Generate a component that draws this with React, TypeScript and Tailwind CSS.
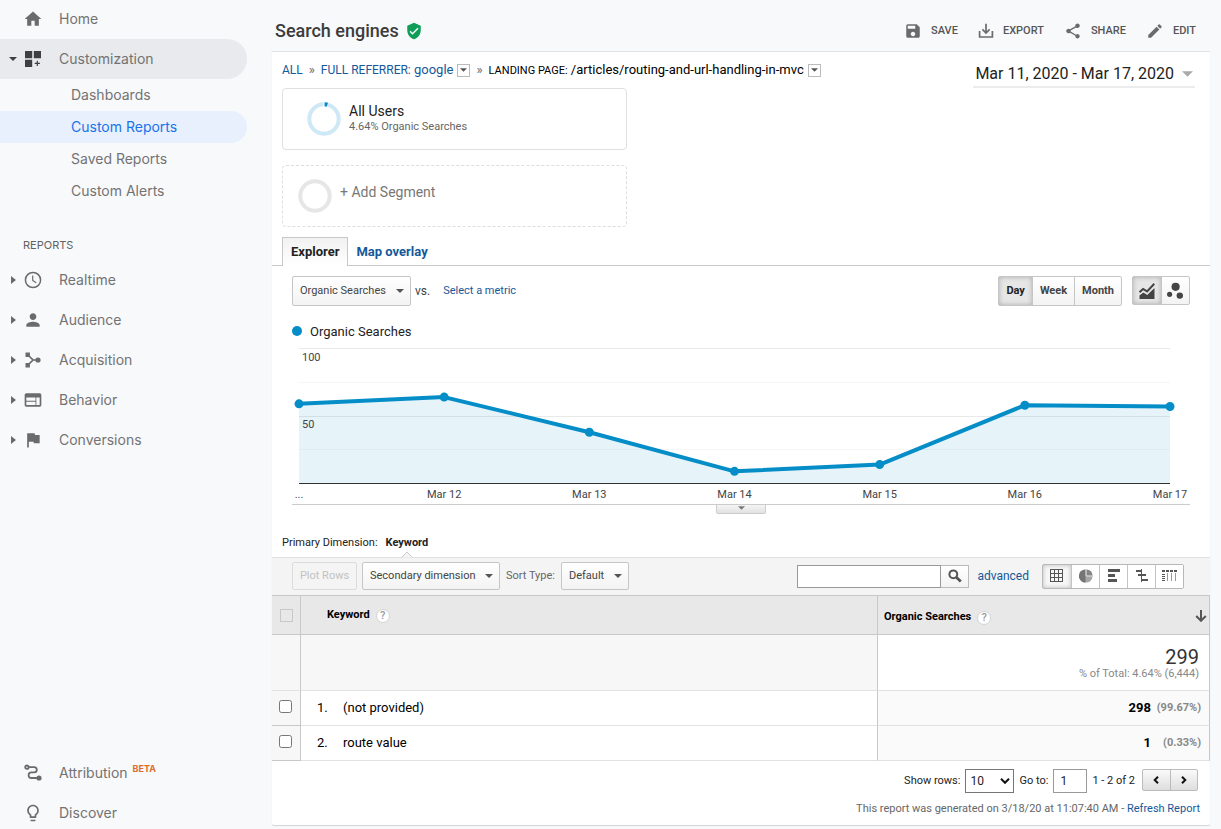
import type { ReactNode } from "react";
import {
  MdEdit,
  MdFlag,
  MdHome,
  MdOutlineLightbulb,
  MdPerson,
  MdSave,
  MdShare,
  MdVerifiedUser,
  MdWeb,
} from "react-icons/md";

const points = [
  { label: "...", value: 59 },
  { label: "Mar 12", value: 64 },
  { label: "Mar 13", value: 38 },
  { label: "Mar 14", value: 9 },
  { label: "Mar 15", value: 14 },
  { label: "Mar 16", value: 58 },
  { label: "Mar 17", value: 57 },
];

const keywords = [
  { name: "(not provided)", searches: 298, share: "(99.67%)" },
  { name: "route value", searches: 1, share: "(0.33%)" },
];

function CaretDown({ className }: { className: string }) {
  return (
    <svg viewBox="0 0 8 4" className={className} aria-hidden="true">
      <path d="M0 0h8L4 4z" fill="currentColor" />
    </svg>
  );
}

function CustomizeIcon() {
  return (
    <svg viewBox="0 0 16 16" className="size-4 text-[#3c4043]" fill="currentColor">
      <path d="M0 0h7.2v7.2H0zM8.8 0H16v7.2H8.8zM0 8.8h7.2V16H0zM11.7 9.8h1.2v2h2v1.200h-2v2h-1.200v-2h-2v-1.200h2z" />
    </svg>
  );
}

function ClockIcon() {
  return (
    <svg viewBox="0 0 18 18" className="size-[18px]" fill="none" stroke="currentColor" strokeWidth="1.5">
      <circle cx="9" cy="9" r="7.6" />
      <path d="M8.7 4.6v4.9l3.6 2.2" strokeWidth="1.2" />
    </svg>
  );
}

function AcquisitionIcon() {
  return (
    <svg viewBox="0 0 18 18" className="size-[18px]" fill="currentColor">
      <path d="M1.5 1.5h4.4v4.4H1.5zM1.5 12.1h4.4v4.4H1.5z" />
      <circle cx="14" cy="9" r="2.6" />
      <path d="M4 4l5 5-5 5M9 9h4" fill="none" stroke="currentColor" strokeWidth="1.7" />
    </svg>
  );
}

function AttributionIcon() {
  return (
    <svg viewBox="0 0 18 18" className="size-[18px]" fill="none" stroke="currentColor" strokeWidth="1.8">
      <circle cx="2.9" cy="3.2" r="1.7" />
      <path d="M4.8 3.2h5.4a2.6 2.6 0 0 1 0 5.2H7.4a2.8 2.8 0 0 0 0 5.6H14" />
      <circle cx="15" cy="14" r="2.6" fill="currentColor" stroke="none" />
    </svg>
  );
}

function ExportIcon() {
  return (
    <svg viewBox="0 0 16 16" className="size-4" fill="none" stroke="currentColor" strokeWidth="1.7">
      <path d="M8 .8v9M4.4 6.4L8 10l3.6-3.6M1.6 8v6h12.8V8" />
    </svg>
  );
}

function LineChartIcon() {
  return (
    <svg viewBox="0 0 16 16" className="size-4" fill="currentColor">
      <path d="M.5 16v-3.6l3.6-3.1 4 2.4 7.4-6.6V16z" />
      <path d="M.5 9.900l3.600-3.200 4 2.400 7.200-7.600" fill="none" stroke="#e6e6e6" strokeWidth="4" />
      <path d="M.5 9.200l3.600-3.200 4 2.400 7.200-7.600" fill="none" stroke="currentColor" strokeWidth="2" />
    </svg>
  );
}

function BubblesIcon() {
  return (
    <svg viewBox="0 0 18 18" className="size-[18px]" fill="currentColor">
      <circle cx="9.6" cy="4.8" r="4.1" />
      <circle cx="3.6" cy="12.3" r="2.6" />
      <circle cx="13.8" cy="13.6" r="3.2" />
    </svg>
  );
}

function GridIcon() {
  return (
    <svg viewBox="0 0 14 14" className="size-3.5" fill="none" stroke="currentColor" shapeRendering="crispEdges">
      <path d="M.5.5h12v12H.5zM4.5.5v12M8.5.5v12M.5 4.5h12M.5 8.5h12" />
    </svg>
  );
}

function PieIcon() {
  return (
    <svg viewBox="0 0 14 14" className="size-3.5">
      <circle cx="7" cy="7" r="6.6" fill="#a6a6a6" />
      <path d="M6.5.4a6.6 6.6 0 0 0 0 13.2z" fill="#757575" />
      <path d="M7.500.5V6.500h6a6.400 6.400 0 0 0-6-6z" fill="#858585" />
      <path d="M7 .4V7h6.600" stroke="#ddd" strokeWidth="1" fill="none" />
    </svg>
  );
}

function BarsIcon() {
  return (
    <svg viewBox="0 0 14 14" className="size-3.5" fill="currentColor">
      <path d="M1 0h12v3H1zM1 5h7v3H1zM1 10h9v3H1z" />
    </svg>
  );
}

function ComparisonIcon() {
  return (
    <svg viewBox="0 0 14 14" className="size-3.5" fill="currentColor" shapeRendering="crispEdges">
      <path d="M6 0h1v13H6zM1 1h5v2H1zM7 5h4v2H7zM3 5h3v2H3zM7 10h6v2H7z" />
    </svg>
  );
}

function PivotIcon() {
  return (
    <svg viewBox="0 0 16 14" className="h-3.5 w-4" fill="none" stroke="currentColor" shapeRendering="crispEdges">
      <path d="M0 2h16" strokeWidth="2" strokeDasharray="3 1" />
      <path d="M0 5.500h3M0 7.500h3M0 9.500h3M0 11.500h3" />
      <path d="M5.500 4v8M9.500 4v8M13.500 4v8" stroke="#999" />
    </svg>
  );
}

function SearchIcon() {
  return (
    <svg viewBox="0 0 14 14" className="size-3.5" fill="none" stroke="currentColor">
      <circle cx="5.300" cy="5.300" r="3.900" strokeWidth="2" />
      <path d="M8.300 8.300l4.500 4.200" strokeWidth="2.800" />
    </svg>
  );
}

function NavItem({ icon, children, className = "h-10" }: { icon: ReactNode; children: ReactNode; className?: string }) {
  return (
    <a href="#" className={`flex items-center pl-6 ${className}`}>
      <span className="flex w-[18px] justify-center text-[#6b6b6b]">{icon}</span>
      <span className="pl-[17px]">{children}</span>
    </a>
  );
}

function ReportItem({ icon, label }: { icon: ReactNode; label: string }) {
  return (
    <a href="#" className="flex h-10 items-center">
      <span className="w-6 pl-[11px] text-[#6b6b6b]">
        <svg viewBox="0 0 5 8" className="h-2 w-[5px]">
          <path d="M0 0v8l5-4z" fill="currentColor" />
        </svg>
      </span>
      <span className="flex w-[18px] justify-center text-[#6b6b6b]">{icon}</span>
      <span className="pl-[17px]">{label}</span>
    </a>
  );
}

function Sidebar() {
  return (
    <nav className="sticky top-0 flex h-screen w-[272px] shrink-0 flex-col overflow-hidden font-['Inter',sans-serif] text-sm text-[#737373]">
      <NavItem icon={<MdHome size={20} className="shrink-0" />} className="h-[39px] pb-px">Home</NavItem>
      <a href="#" className="mr-[25px] flex h-10 shrink-0 items-center rounded-r-full bg-[#e8eaed]">
        <span className="w-6 pl-[9px]">
          <CaretDown className="h-1 w-2 text-[#3c4043]" />
        </span>
        <span className="flex w-[18px] justify-center">
          <CustomizeIcon />
        </span>
        <span className="pl-[17px]">Customization</span>
      </a>
      <a href="#" className="flex h-8 items-center pl-[71px]">Dashboards</a>
      <a href="#" className="mr-[25px] flex h-8 items-center rounded-r-full bg-[#e8f0fe] pl-[71px] text-[#1a73e8]">Custom Reports</a>
      <a href="#" className="flex h-8 items-center pl-[71px]">Saved Reports</a>
      <a href="#" className="flex h-8 items-center pl-[71px]">Custom Alerts</a>
      <h2 className="flex h-[53px] items-center pt-6 pl-[23px] text-[11px] text-[#616161]">REPORTS</h2>
      <ReportItem icon={<ClockIcon />} label="Realtime" />
      <ReportItem icon={<MdPerson size={20} className="shrink-0" />} label="Audience" />
      <ReportItem icon={<AcquisitionIcon />} label="Acquisition" />
      <ReportItem icon={<MdWeb size={20} className="shrink-0" />} label="Behavior" />
      <ReportItem icon={<MdFlag size={20} className="shrink-0" />} label="Conversions" />
      <div className="mt-auto">
        <NavItem icon={<AttributionIcon />}>
          <span className="flex items-start gap-[5px]">
            Attribution
            <span className="text-[9px] leading-3 font-bold text-[#e06c2c]">BETA</span>
          </span>
        </NavItem>
        <NavItem icon={<MdOutlineLightbulb size={20} className="shrink-0" />} className="h-9 pt-1">Discover</NavItem>
      </div>
    </nav>
  );
}

function HeaderAction({ icon, label }: { icon: ReactNode; label: string }) {
  return (
    <button type="button" className="flex items-center gap-[9px] text-[11px] font-medium text-[#555]">
      <span className="text-[#6b6b6b]">{icon}</span>
      <span className="pt-px">{label}</span>
    </button>
  );
}

function Picker({ label, options, className }: { label: string; options: string[]; className: string }) {
  return (
    <span className="relative flex">
      <select
        aria-label={label}
        className={`appearance-none rounded-xs border border-[#c6c6c6] bg-linear-to-b from-white to-[#f3f3f3] pl-[7px] text-[11px] text-[#444] ${className}`}
      >
        {options.map((o) => (
          <option key={o}>{o}</option>
        ))}
      </select>
      <CaretDown className="pointer-events-none absolute inset-y-0 right-[7px] my-auto h-1 w-2 text-[#555]" />
    </span>
  );
}

function CrumbMenu({ label }: { label: string }) {
  return (
    <button type="button" aria-label={label} className="flex size-[13px] items-center justify-center border border-[#bbb] bg-white">
      <CaretDown className="h-1 w-[7px] text-[#555]" />
    </button>
  );
}

function Help() {
  return (
    <button
      type="button"
      aria-label="Help"
      className="flex size-3.5 items-center justify-center rounded-full border border-[#d4d4d4] bg-white text-[11px] leading-3 font-medium text-[#999]"
    >
      ?
    </button>
  );
}

function Segments() {
  return (
    <div className="flex w-[345px] flex-col gap-[15px]">
      <button type="button" className="flex h-[62px] items-center rounded-sm border border-[#e0e0e0] bg-white pl-6 text-left">
        <svg viewBox="0 0 34 34" className="size-[34px]" fill="none" strokeWidth="4">
          <circle cx="17" cy="17" r="14.700" stroke="#cfe8f5" />
          <path d="M17.300 2.300a14.700 14.700 0 0 1 3.900.6" stroke="#058dc7" />
          <path d="M16.900 0v5M21.600 .5l-1.300 4.800" stroke="#fff" strokeWidth="1" />
        </svg>
        <span className="flex flex-col pb-[3px] pl-2">
          <span className="text-sm leading-[18px] text-[#222]">All Users</span>
          <span className="text-[11px] leading-[14px] text-[#666]">4.64% Organic Searches</span>
        </span>
      </button>
      <button type="button" className="flex h-[62px] items-center rounded-sm border border-dashed border-[#dedede] bg-white pl-[15px]">
        <svg viewBox="0 0 34 34" className="size-[34px]" fill="none">
          <circle cx="17" cy="17" r="14.700" stroke="#e6e6e6" strokeWidth="4" />
        </svg>
        <span className="pb-2 pl-2 text-sm text-[#777]">+ Add Segment</span>
      </button>
    </div>
  );
}

function Chart() {
  const step = 100 / (points.length - 1);
  const y = (v: number) => 135.5 - v * 1.35;
  const line = points.map((p, i) => `${i ? "L" : "M"}${i * step * 10} ${y(p.value)}`).join("");
  const dots = points.map((p, i) => `M${i * step * 10} ${y(p.value)}h0`).join("");
  return (
    <div>
      <div className="relative mr-10 ml-[27px] h-[136px]">
        <svg viewBox="0 0 1000 136" preserveAspectRatio="none" className="block h-full w-full overflow-visible" fill="none">
          <path d="M0 .5h1000M0 68.500h1000" stroke="#e9e9e9" vectorEffect="non-scaling-stroke" />
          <path d="M0 34.500h1000M0 101.500h1000" stroke="#f6f6f6" vectorEffect="non-scaling-stroke" />
          <path d={`${line}V135.500H0z`} fill="#058dc7" fillOpacity="0.1" />
          <path d="M0 135.500h1000" stroke="#333" vectorEffect="non-scaling-stroke" />
          <path d={line} stroke="#058dc7" strokeWidth="4" strokeLinejoin="round" vectorEffect="non-scaling-stroke" />
          <path d={dots} stroke="#058dc7" strokeWidth="9" strokeLinecap="round" vectorEffect="non-scaling-stroke" />
        </svg>
        <span className="absolute top-0.5 left-[3px] text-[11px] leading-4 text-[#444]">100</span>
        <span className="absolute top-[69px] left-[3px] text-[11px] leading-4 text-[#444]">50</span>
      </div>
      <div className="relative mr-10 ml-[27px] h-5 text-[11px] leading-[22px] text-[#444]">
        {points.map((p, i) => (
          <span key={p.label} className="absolute -translate-x-1/2 whitespace-nowrap" style={{ left: `${i * step}%` }}>
            {p.label}
          </span>
        ))}
      </div>
      <div className="mx-5 border-t border-[#ccc]">
        <button
          type="button"
          aria-label="Collapse chart"
          className="mx-auto flex h-[9px] w-[50px] items-center justify-center rounded-b-xs border border-t-0 border-[#ccc] bg-linear-to-b from-[#f5f5f5] to-[#e2e2e2] pb-0.5"
        >
          <CaretDown className="h-1 w-[7px] text-[#777]" />
        </button>
      </div>
    </div>
  );
}

const views = [
  { label: "Data", icon: <GridIcon />, className: "bg-[#f6f6f6] shadow-[inset_0_0_4px_rgba(0,0,0,0.25)]" },
  { label: "Percentage", icon: <PieIcon />, className: "bg-white border-l" },
  { label: "Performance", icon: <BarsIcon />, className: "bg-white border-l" },
  { label: "Comparison", icon: <ComparisonIcon />, className: "bg-white border-l" },
  { label: "Pivot", icon: <PivotIcon />, className: "bg-white border-l" },
];

function TableToolbar() {
  return (
    <div className="flex h-[39px] items-center border-y border-t-[#e0e0e0] border-b-[#c8c8c8] bg-[#f4f4f4] pr-[26px] pb-px pl-5 text-[11px]">
      <button type="button" disabled className="h-7 w-[65px] rounded-xs border border-[#dcdcdc] pt-px text-[#c2c2c2]">Plot Rows</button>
      <div className="ml-[5px]">
        <Picker label="Secondary dimension" options={["Secondary dimension"]} className="h-7 w-[138px]" />
      </div>
      <span className="px-[6px] text-[#666]">Sort Type:</span>
      <Picker label="Sort type" options={["Default", "Weighted"]} className="h-7 w-[68px]" />
      <form className="ml-auto flex h-[23px]">
        <input type="text" aria-label="Search keywords" className="w-36 border border-[#999] bg-white px-1" />
        <button type="button" aria-label="Search" className="flex w-7 items-center justify-center border border-l-0 border-[#bbb] bg-linear-to-b from-white to-[#f3f3f3] text-[#555]">
          <SearchIcon />
        </button>
      </form>
      <a href="#" className="ml-2 text-xs text-[#15599a]">advanced</a>
      <div className="ml-[13px] flex h-[25px] rounded-xs border border-[#b8b8b8] text-[#555]">
        {views.map((v) => (
          <button key={v.label} type="button" aria-label={v.label} className={`flex w-7 items-center justify-center border-[#c4c4c4] ${v.className}`}>
            {v.icon}
          </button>
        ))}
      </div>
    </div>
  );
}

function KeywordTable() {
  return (
    <table className="w-full table-fixed border-separate border-spacing-0 text-[13px] text-black">
      <colgroup>
        <col className="w-[29px]" />
        <col />
        <col className="w-[332px]" />
      </colgroup>
      <thead>
        <tr className="h-[39px] bg-[#e8e8e8] text-left text-[11px]">
          <th className="border-r border-b border-[#c8c8c8] p-0">
            <input type="checkbox" disabled aria-label="Select all rows" className="ml-2 block size-[13px] appearance-none border border-[#c8c8c8]" />
          </th>
          <th className="border-r border-b border-[#c8c8c8] p-0 pt-px pl-[26px] font-bold">
            <span className="flex items-center gap-1.5">Keyword <Help /></span>
          </th>
          <th className="border-r border-b border-[#c8c8c8] p-0 pt-px pl-1.5 font-bold">
            <span className="flex items-center gap-1.5 pt-1">
              Organic Searches <Help />
              <svg viewBox="0 0 12 12" className="mr-0.5 mb-1 ml-auto size-3" fill="none" stroke="#555" strokeWidth="2">
                <path d="M6 0v10.500M1.200 6L6 10.800 10.800 6" />
              </svg>
            </span>
          </th>
        </tr>
      </thead>
      <tbody>
        <tr className="h-14">
          <td className="border-r border-b border-r-[#c8c8c8] border-b-[#e2e2e2] bg-[#f7f7f7] p-0" />
          <td className="border-r border-b border-r-[#c8c8c8] border-b-[#e2e2e2] bg-[#f7f7f7] p-0" />
          <td className="border-r border-b border-r-[#c8c8c8] border-b-[#e2e2e2] p-0 pt-[3px] pr-2.5 text-right">
            <div className="text-xl leading-5 text-[#333]">299</div>
            <div className="text-[11px] leading-[14px] text-[#888]">% of Total: 4.64% (6,444)</div>
          </td>
        </tr>
        {keywords.map((k, i) => (
          <tr key={k.name} className="h-[35px]">
            <td className="border-r border-b border-[#c8c8c8] bg-[#f7f7f7] p-0">
              <input type="checkbox" aria-label={`Select ${k.name}`} className="mb-1 ml-[7px] block size-[13px]" />
            </td>
            <td className="border-r border-b border-r-[#c8c8c8] border-b-[#e2e2e2] p-0">
              <span className="flex pl-4">
                <span className="w-[26px]">{i + 1}.</span>
                {k.name}
              </span>
            </td>
            <td className="border-r border-b border-r-[#c8c8c8] border-b-[#e2e2e2] bg-[#fafafa] p-0 pr-2">
              <span className="flex items-center justify-end font-bold">
                {k.searches}
                <span className="w-[50px] pt-px text-right text-[11px] text-[#888]">{k.share}</span>
              </span>
            </td>
          </tr>
        ))}
      </tbody>
    </table>
  );
}

function TableFooter() {
  return (
    <div className="flex flex-col items-end gap-[7px] pt-2 pb-[7px] text-[11px] text-[#222]">
      <div className="flex h-6 items-center gap-[5px] pr-3">
        <label htmlFor="rows">Show rows:</label>
        <span className="relative flex">
          <select id="rows" className="h-6 w-[49px] appearance-none border border-[#767676] bg-white pl-1 text-xs">
            <option>10</option>
            <option>25</option>
          </select>
          <svg viewBox="0 0 10 6" className="pointer-events-none absolute top-[9px] right-1 h-1.5 w-2.5" fill="none" stroke="#111" strokeWidth="2">
            <path d="M1 .8l4 4 4-4" />
          </svg>
        </span>
        <label htmlFor="page">Go to:</label>
        <input id="page" type="text" defaultValue="1" className="h-6 w-[34px] border border-[#999] bg-white pl-1.5 text-xs" />
        <span>1 - 2 of 2</span>
        <div className="ml-0.5 flex h-[22px] w-14 self-start rounded-xs border border-[#bbb] bg-linear-to-b from-[#fafafa] to-[#dedede]">
          <button type="button" aria-label="Previous page" className="flex flex-1 items-center justify-center border-r border-[#bbb]">
            <svg viewBox="0 0 6 8" className="h-2 w-1.5" fill="none" stroke="#111" strokeWidth="2">
              <path d="M5 .7L1.700 4 5 7.300" />
            </svg>
          </button>
          <button type="button" aria-label="Next page" className="flex flex-1 items-center justify-center">
            <svg viewBox="0 0 6 8" className="h-2 w-1.5" fill="none" stroke="#111" strokeWidth="2">
              <path d="M1 .7L4.300 4 1 7.300" />
            </svg>
          </button>
        </div>
      </div>
      <p className="pr-2.5 leading-[18px] text-[#666]">
        This report was generated on 3/18/20 at 11:07:40 AM - <a href="#" className="text-[#15599a]">Refresh Report</a>
      </p>
    </div>
  );
}

export default function App() {
  return (
    <div className="flex min-h-screen bg-[#f8f9fb] font-['Roboto',sans-serif]">
      <Sidebar />
      <main className="min-w-0 flex-1 pr-[11px]">
        <header className="flex h-[51px] items-center justify-between pt-[11px] pr-3.5 pl-[3px]">
          <h1 className="flex items-center gap-1.5 text-lg font-medium text-[#3c3c3c]">
            Search engines
            <MdVerifiedUser size={18} className="text-[#0f9d58]" />
          </h1>
          <div className="flex items-center gap-5">
            <HeaderAction icon={<MdSave size={18} />} label="SAVE" />
            <HeaderAction icon={<ExportIcon />} label="EXPORT" />
            <HeaderAction icon={<MdShare size={18} />} label="SHARE" />
            <HeaderAction icon={<MdEdit size={18} />} label="EDIT" />
          </div>
        </header>

        <div className="rounded-b-xs border-t border-[#e0e2e6] bg-white shadow-[0_1px_1px_rgba(0,0,0,0.15)]">
          <section className="flex justify-between pr-[15px] pl-2.5">
            <div>
              <div className="flex h-9 items-center text-[13px] text-[#666]">
                <a href="#" className="text-xs text-[#15599a]">ALL</a>
                <span className="px-1.5">»</span>
                <a href="#" className="mr-1 text-[#15599a]"><span className="text-xs">FULL REFERRER:</span> google</a>
                <CrumbMenu label="Change referrer" />
                <span className="px-1.5">»</span>
                <span className="mr-1 text-black"><span className="text-[11px]">LANDING PAGE:</span> /articles/routing-and-url-handling-in-mvc</span>
                <CrumbMenu label="Change landing page" />
              </div>
              <Segments />
            </div>
            <button type="button" className="mt-2 flex h-7 items-center gap-2 self-start border-b-2 border-[#ececec] px-0.5 pt-0.5 text-base text-[#222]">
              Mar 11, 2020 - Mar 17, 2020
              <CaretDown className="h-1.5 w-[11px] text-[#aaa]" />
            </button>
          </section>

          <div role="tablist" className="mt-2.5 flex h-[29px] pl-2.5 text-[13px] font-bold shadow-[inset_0_-1px_0_#c8c8c8]">
            <button type="button" role="tab" aria-selected="true" className="border border-b-0 border-[#c8c8c8] bg-linear-to-b from-[#f1f1f1] to-white px-2 text-[#222]">Explorer</button>
            <button type="button" role="tab" aria-selected="false" className="px-2 text-[#15599a]">Map overlay</button>
          </div>

          <div className="flex items-start justify-between px-5 pt-2.5">
            <div className="flex items-center text-[11px] text-[#444]">
              <Picker label="Metric" options={["Organic Searches"]} className="h-[30px] w-[119px]" />
              <span className="pl-1 text-xs">vs.</span>
              <a href="#" className="pt-px pl-[13px] text-[#15599a]">Select a metric</a>
            </div>
            <div className="flex items-start gap-2.5 text-[11px] font-bold text-[#444]">
              <div className="flex h-[30px] rounded-xs border border-[#c6c6c6] bg-linear-to-b from-white to-[#f3f3f3]">
                <button type="button" className="bg-[#e6e6e6] px-[7px] pt-px text-[#222] shadow-[inset_0_0_5px_rgba(0,0,0,0.25)]">Day</button>
                <button type="button" className="border-x border-[#c6c6c6] px-[7px] pt-px">Week</button>
                <button type="button" className="px-[7px] pt-px">Month</button>
              </div>
              <div className="flex h-[29px] rounded-xs border border-[#c6c6c6] bg-linear-to-b from-white to-[#f3f3f3]">
                <button type="button" aria-label="Line chart" className="flex w-7 items-center justify-center bg-[#e6e6e6] shadow-[inset_0_0_5px_rgba(0,0,0,0.25)]"><LineChartIcon /></button>
                <button type="button" aria-label="Motion chart" className="flex w-7 items-center justify-center border-l border-[#c6c6c6] pr-0.5"><BubblesIcon /></button>
              </div>
            </div>
          </div>

          <div className="mt-4 mb-2 flex h-[18px] items-center gap-2 pl-5 text-[13px] text-[#222]">
            <span className="size-2.5 rounded-full bg-[#058dc7]" />
            <span className="pt-px">Organic Searches</span>
          </div>
          <Chart />

          <div className="flex h-[43px] items-center gap-2 pt-[15px] pl-2.5 text-[11px] text-[#222]">
            Primary Dimension:
            <span className="relative flex h-full items-center font-bold">
              Keyword
              <svg viewBox="0 0 12 7" className="absolute bottom-[-1px] left-1/2 z-10 h-[7px] w-3 -translate-x-1/2" fill="#f4f4f4" stroke="#ccc">
                <path d="M.5 6.500L6 1l5.500 5.500" />
              </svg>
            </span>
          </div>
          <TableToolbar />
          <KeywordTable />
          <TableFooter />
        </div>
      </main>
    </div>
  );
}
